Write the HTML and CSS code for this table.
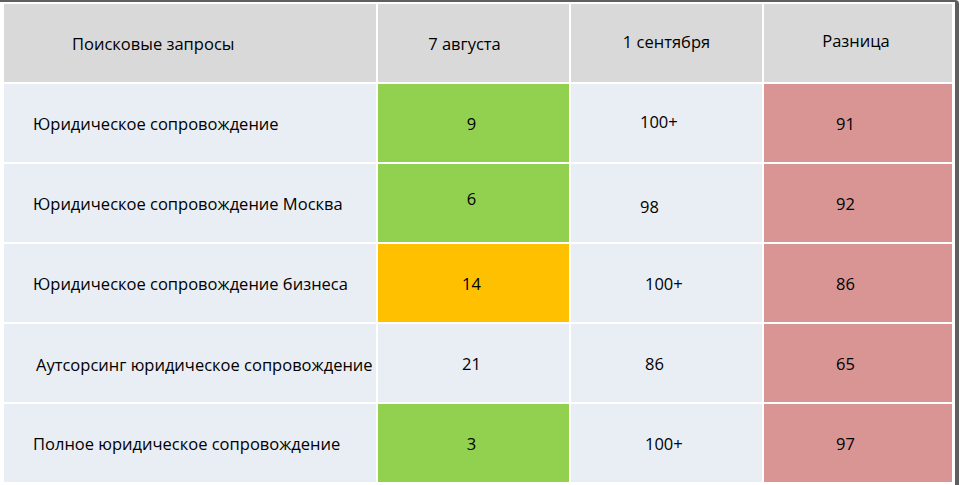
FILE: index.html
```html
<!DOCTYPE html>
<html lang="ru">
<head>
<meta charset="utf-8">
<title>Поисковые запросы</title>
<link rel="stylesheet" href="styles.css">
</head>
<body>
<div class="frame">
  <div class="table">
    <div class="cell head c1">Поисковые запросы</div>
    <div class="cell head c2">7 августа</div>
    <div class="cell head c3">1 сентября</div>
    <div class="cell head c4">Разница</div>

    <div class="cell row q">Юридическое сопровождение</div>
    <div class="cell green num">9</div>
    <div class="cell row num n3 lift">100+</div>
    <div class="cell red num n4">91</div>

    <div class="cell row q">Юридическое сопровождение Москва</div>
    <div class="cell green num up">6</div>
    <div class="cell row num n3 down">98</div>
    <div class="cell red num n4">92</div>

    <div class="cell row q">Юридическое сопровождение бизнеса</div>
    <div class="cell orange num">14</div>
    <div class="cell row num n3 n3b">100+</div>
    <div class="cell red num n4">86</div>

    <div class="cell row q"><span class="spell">Аутсорсинг юридическое сопровождение</span></div>
    <div class="cell row num">21</div>
    <div class="cell row num n3 n3b">86</div>
    <div class="cell red num n4">65</div>

    <div class="cell row q">Полное юридическое сопровождение</div>
    <div class="cell green num">3</div>
    <div class="cell row num n3 n3b">100+</div>
    <div class="cell red num n4">97</div>
  </div>
</div>
</body>
</html>
```

FILE: styles.css
```css
html, body {
  margin: 0;
  padding: 0;
  background: #ffffff;
}

body {
  font-family: "Open Sans", "Liberation Sans", sans-serif;
  font-size: 16.5px;
  color: #000000;
}

.frame {
  width: 959px;
  height: 485px;
  box-sizing: border-box;
  border-top: 2px solid #5f5f5f;
  border-right: 4px solid #5f5f5f;
  border-top-right-radius: 4px;
  padding: 2px 3px 3px 4px;
}

.table {
  display: grid;
  grid-template-columns: 372px 191px 191px 188px;
  grid-template-rows: repeat(6, 78px);
  gap: 2px;
  background: #ffffff;
}

.cell {
  display: flex;
  align-items: center;
  justify-content: center;
  white-space: nowrap;
}

.head {
  background: #d9d9d9;
}

.head.c1 {
  justify-content: flex-start;
  padding-left: 68px;
}

.head.c2 {
  padding-right: 18px;
}

.head.c3 {
  padding-bottom: 4px;
}

.head.c4 {
  padding-bottom: 6px;
  padding-right: 4px;
}

.row {
  background: #e9edf4;
}

.green {
  background: #92d050;
}

.orange {
  background: #ffc000;
}

.red {
  background: #d99594;
}

.q {
  justify-content: flex-start;
  padding-left: 29px;
}

.num {
  padding-right: 4px;
}

.n3 {
  justify-content: flex-start;
  padding-left: 69px;
}

.n3b {
  padding-left: 74px;
}

.n4 {
  justify-content: flex-start;
  padding-left: 72px;
}

.lift {
  padding-bottom: 4px;
}

.up {
  padding-bottom: 10px;
}

.down {
  padding-top: 6px;
}

.spell {
  margin-left: 3px;
  margin-top: 2px;
}
```
